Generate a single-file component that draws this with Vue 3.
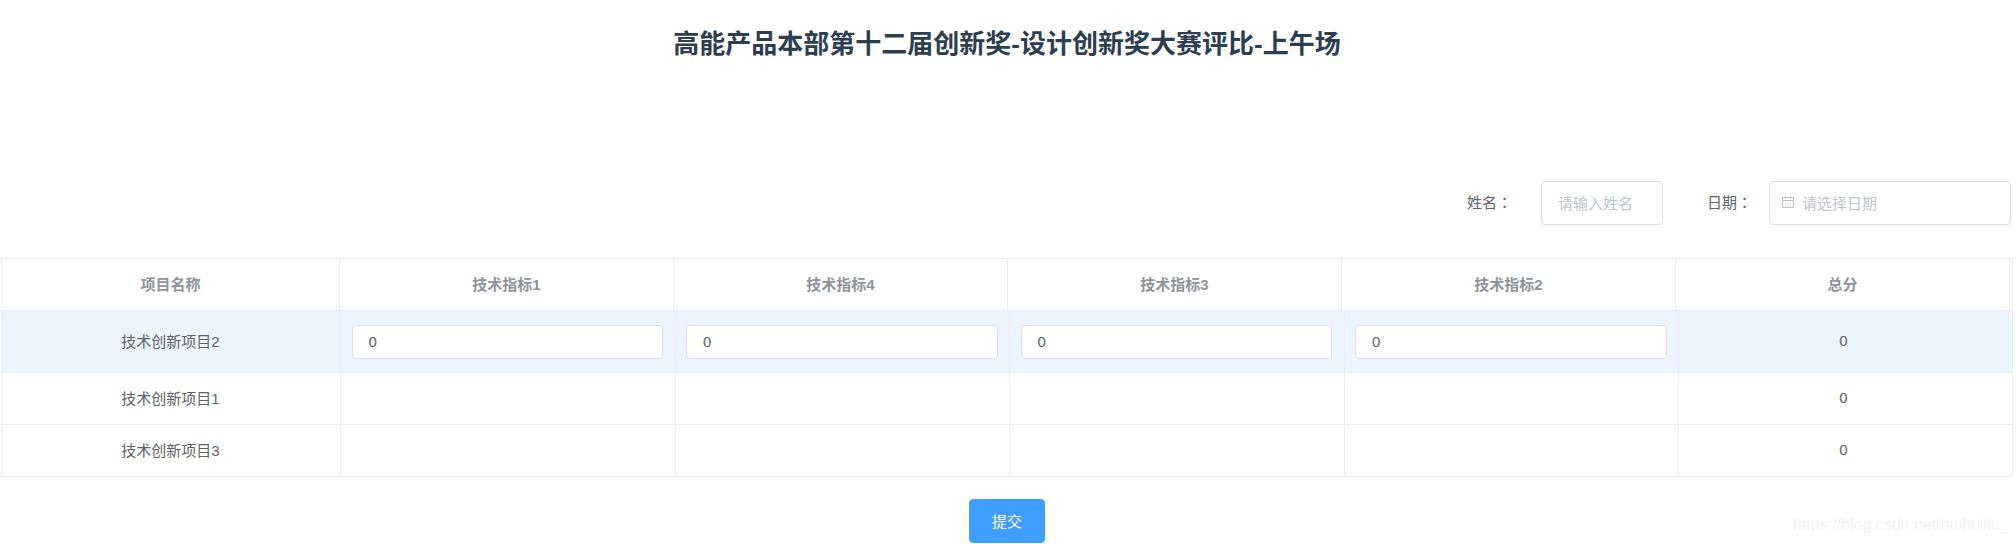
<script setup>
const headers = ['项目名称', '技术指标1', '技术指标4', '技术指标3', '技术指标2', '总分']
const rows = [
  { name: '技术创新项目2', editing: true, vals: ['0', '0', '0', '0'], total: '0' },
  { name: '技术创新项目1', editing: false, vals: ['', '', '', ''], total: '0' },
  { name: '技术创新项目3', editing: false, vals: ['', '', '', ''], total: '0' }
]
</script>

<template>
  <div class="page">
    <h1 class="title">高能产品本部第十二届创新奖-设计创新奖大赛评比-上午场</h1>
    <div class="filters">
      <label class="flabel name-label">姓名<span class="colon">：</span></label>
      <div class="finput name-input"><span class="ph">请输入姓名</span></div>
      <label class="flabel date-label">日期<span class="colon">：</span></label>
      <div class="finput date-input">
        <svg class="cal" viewBox="0 0 14 14" width="14" height="14" fill="none" stroke="#c0c4cc" stroke-width="1">
          <rect x="1.5" y="2.5" width="11" height="10" />
          <path d="M1.5 5.5h11M4.5 1v2.500M9.500 1v2.500M4 8h1M6.500 8h1M9 8h1M4 10.500h1M6.500 10.500h1M9 10.500h1" />
        </svg>
        <span class="ph">请选择日期</span>
      </div>
    </div>
    <div class="table">
      <div class="thead">
        <div v-for="h in headers" :key="h" class="th"><span class="txt">{{ h }}</span></div>
      </div>
      <div v-for="r in rows" :key="r.name" class="tr" :class="{ current: r.editing }">
        <div class="td"><span class="txt">{{ r.name }}</span></div>
        <div v-for="(v, i) in r.vals" :key="i" class="td">
          <div v-if="r.editing" class="cell-input">{{ v }}</div>
        </div>
        <div class="td total"><span class="txt">{{ r.total }}</span></div>
      </div>
    </div>
    <div class="actions"><button class="submit">提交</button></div>
    <span class="watermark">https://blog.csdn.net/huihuiliu_</span>
  </div>
</template>

<style scoped>
.page {
  position: relative;
  width: 2016px;
  height: 544px;
  overflow: hidden;
  background: #fff;
  font-family: "Liberation Sans", "Noto Sans CJK SC", sans-serif;
  font-size: 15px;
  color: #606266;
  display: flex;
  flex-direction: column;
}
.title {
  margin: 0;
  padding: 28px 2px 0 0;
  height: 181px;
  box-sizing: border-box;
  text-align: center;
  font-size: 26px;
  line-height: 32px;
  font-weight: 700;
  color: #2c3e50;
}
.filters {
  display: flex;
  align-items: center;
  height: 44px;
  padding-left: 1467px;
}
.flabel { white-space: nowrap; width: 74px; line-height: 40px; height: 42px; }
.date-label { width: 62px; }
.colon { font-family: "Noto Sans CJK TC", sans-serif; }
.finput {
  box-sizing: border-box;
  height: 44px;
  border: 1px solid #dcdfe6;
  border-radius: 4px;
  display: flex;
  align-items: center;
  padding-bottom: 2px;
  color: #c0c4cc;
}
.name-input { width: 122px; padding-left: 16px; margin-right: 44px; }
.date-input { width: 242px; padding-left: 11px; }
.cal { margin-right: 7px; flex: none; }
.table {
  box-sizing: border-box;
  margin: 33px 0 0 1px;
  width: 2012px;
  border: 1px solid #ebeef5;
}
.thead {
  display: grid;
  grid-template-columns: 338px 334px 334px 334px 334px 334px;
  height: 52px;
  border-bottom: 1px solid #ebeef5;
  box-sizing: border-box;
}
.th {
  display: flex;
  align-items: center;
  justify-content: center;
  font-weight: 700;
  color: #909399;
  border-right: 1px solid #ebeef5;
}
.txt { position: relative; top: -1px; }
.tr {
  display: grid;
  grid-template-columns: 339px repeat(4, 334.5px) 1fr;
  height: 52px;
}
.tr.current { height: 62px; background: #ecf5ff; }
.tr:last-child { height: 51px; }
.td {
  box-sizing: border-box;
  display: flex;
  align-items: center;
  justify-content: center;
  border-right: 1px solid #ebeef5;
  border-bottom: 1px solid #ebeef5;
  padding: 0 11.5px 0 10.5px;
}
.tr .td:last-child { border-right: none; }
.tr:last-child .td { border-bottom: none; }
.td.total { padding: 0 14px 0 10px; }
.cell-input {
  box-sizing: border-box;
  width: 100%;
  height: 34px;
  line-height: 31px;
  padding-left: 16px;
  background: #fff;
  border: 1px solid #dcdfe6;
  border-radius: 4px;
}
.actions {
  display: flex;
  justify-content: center;
  margin-top: 22px;
  padding-right: 2px;
}
.submit {
  width: 76px;
  height: 44px;
  border: 1px solid #409eff;
  border-radius: 4px;
  background: #409eff;
  color: #fff;
  font: inherit;
  padding-bottom: 2px;
}
.watermark {
  position: absolute;
  left: 1793px;
  top: 516px;
  font-size: 16px;
  color: rgba(0, 0, 0, 0.07);
}
</style>
